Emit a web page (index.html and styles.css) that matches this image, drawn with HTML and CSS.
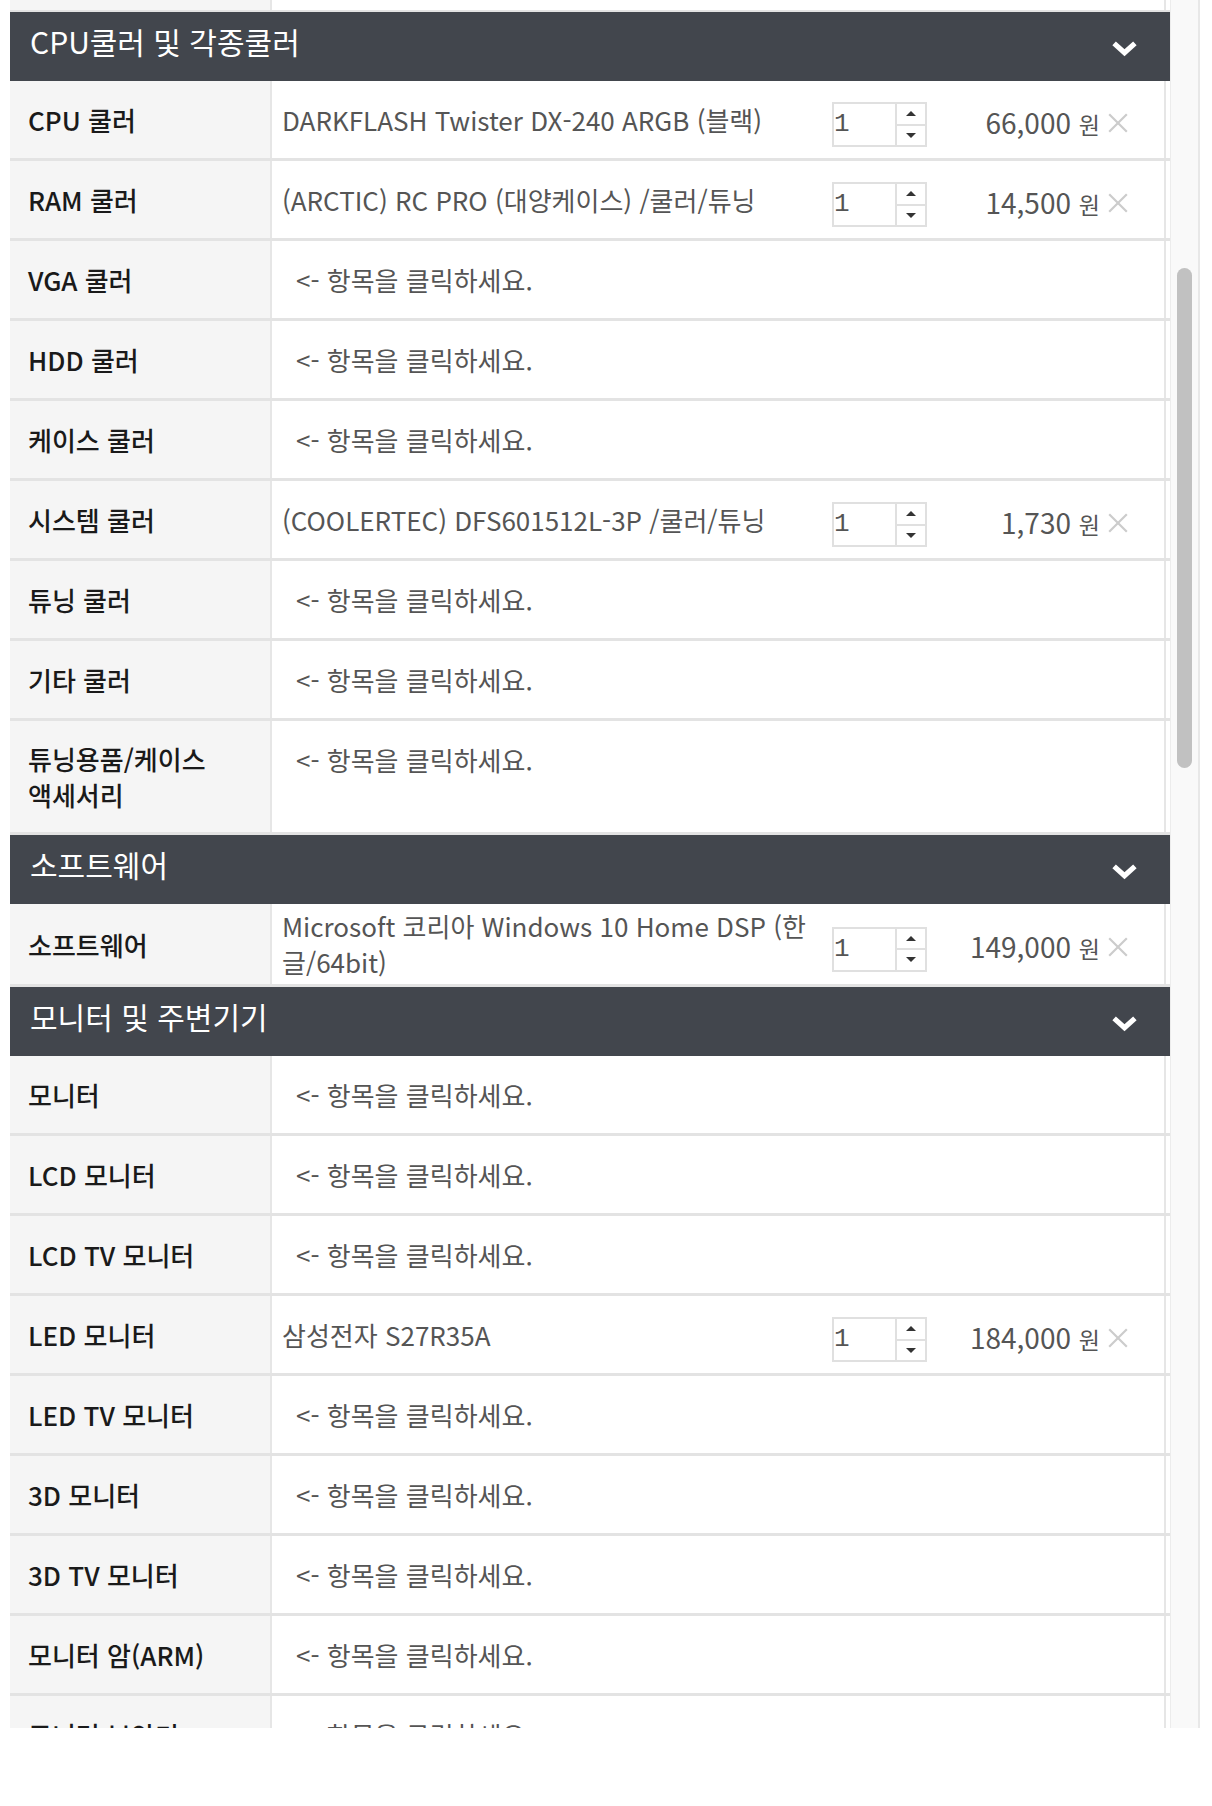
FILE: index.html
```html
<!DOCTYPE html>
<html lang="ko">
<head>
    <meta charset="UTF-8">
    <meta name="viewport" content="width=device-width, initial-scale=1.0">
    <title>견적 목록</title>
    <link rel="stylesheet" href="styles.css">
</head>
<body>
    <div class="panel">
        <div class="list">
            <div class="row row-cut">
                <div class="label"></div>
                <div class="item"></div>
            </div>

            <div class="group-head">
                <span>CPU쿨러 및 각종쿨러</span>
                <svg class="chev" viewBox="0 0 26 16"><path d="M3 3l10 9 10-9"/></svg>
            </div>
            <div class="row">
                <div class="label">CPU 쿨러</div>
                <div class="item">
                    <p class="name">DARKFLASH Twister DX-240 ARGB (블랙)</p>
                    <div class="qty"><span class="num">1</span><span class="spin"><i class="up"></i><i class="down"></i></span></div>
                    <div class="price">66,000 <small>원</small></div>
                    <svg class="del" viewBox="0 0 20 20"><path d="M2 2l16 16M18 2L2 18"/></svg>
                </div>
            </div>
            <div class="row">
                <div class="label">RAM 쿨러</div>
                <div class="item">
                    <p class="name">(ARCTIC) RC PRO (대양케이스) /쿨러/튜닝</p>
                    <div class="qty"><span class="num">1</span><span class="spin"><i class="up"></i><i class="down"></i></span></div>
                    <div class="price">14,500 <small>원</small></div>
                    <svg class="del" viewBox="0 0 20 20"><path d="M2 2l16 16M18 2L2 18"/></svg>
                </div>
            </div>
            <div class="row">
                <div class="label">VGA 쿨러</div>
                <div class="item"><p class="empty">&lt;- 항목을 클릭하세요.</p></div>
            </div>
            <div class="row">
                <div class="label">HDD 쿨러</div>
                <div class="item"><p class="empty">&lt;- 항목을 클릭하세요.</p></div>
            </div>
            <div class="row">
                <div class="label">케이스 쿨러</div>
                <div class="item"><p class="empty">&lt;- 항목을 클릭하세요.</p></div>
            </div>
            <div class="row">
                <div class="label">시스템 쿨러</div>
                <div class="item">
                    <p class="name">(COOLERTEC) DFS601512L-3P /쿨러/튜닝</p>
                    <div class="qty"><span class="num">1</span><span class="spin"><i class="up"></i><i class="down"></i></span></div>
                    <div class="price">1,730 <small>원</small></div>
                    <svg class="del" viewBox="0 0 20 20"><path d="M2 2l16 16M18 2L2 18"/></svg>
                </div>
            </div>
            <div class="row">
                <div class="label">튜닝 쿨러</div>
                <div class="item"><p class="empty">&lt;- 항목을 클릭하세요.</p></div>
            </div>
            <div class="row">
                <div class="label">기타 쿨러</div>
                <div class="item"><p class="empty">&lt;- 항목을 클릭하세요.</p></div>
            </div>
            <div class="row">
                <div class="label">튜닝용품/케이스 액세서리</div>
                <div class="item"><p class="empty">&lt;- 항목을 클릭하세요.</p></div>
            </div>

            <div class="group-head">
                <span>소프트웨어</span>
                <svg class="chev" viewBox="0 0 26 16"><path d="M3 3l10 9 10-9"/></svg>
            </div>
            <div class="row">
                <div class="label">소프트웨어</div>
                <div class="item">
                    <p class="name">Microsoft 코리아 Windows 10 Home DSP (한글/64bit)</p>
                    <div class="qty"><span class="num">1</span><span class="spin"><i class="up"></i><i class="down"></i></span></div>
                    <div class="price">149,000 <small>원</small></div>
                    <svg class="del" viewBox="0 0 20 20"><path d="M2 2l16 16M18 2L2 18"/></svg>
                </div>
            </div>

            <div class="group-head">
                <span>모니터 및 주변기기</span>
                <svg class="chev" viewBox="0 0 26 16"><path d="M3 3l10 9 10-9"/></svg>
            </div>
            <div class="row">
                <div class="label">모니터</div>
                <div class="item"><p class="empty">&lt;- 항목을 클릭하세요.</p></div>
            </div>
            <div class="row">
                <div class="label">LCD 모니터</div>
                <div class="item"><p class="empty">&lt;- 항목을 클릭하세요.</p></div>
            </div>
            <div class="row">
                <div class="label">LCD TV 모니터</div>
                <div class="item"><p class="empty">&lt;- 항목을 클릭하세요.</p></div>
            </div>
            <div class="row">
                <div class="label">LED 모니터</div>
                <div class="item">
                    <p class="name">삼성전자 S27R35A</p>
                    <div class="qty"><span class="num">1</span><span class="spin"><i class="up"></i><i class="down"></i></span></div>
                    <div class="price">184,000 <small>원</small></div>
                    <svg class="del" viewBox="0 0 20 20"><path d="M2 2l16 16M18 2L2 18"/></svg>
                </div>
            </div>
            <div class="row">
                <div class="label">LED TV 모니터</div>
                <div class="item"><p class="empty">&lt;- 항목을 클릭하세요.</p></div>
            </div>
            <div class="row">
                <div class="label">3D 모니터</div>
                <div class="item"><p class="empty">&lt;- 항목을 클릭하세요.</p></div>
            </div>
            <div class="row">
                <div class="label">3D TV 모니터</div>
                <div class="item"><p class="empty">&lt;- 항목을 클릭하세요.</p></div>
            </div>
            <div class="row">
                <div class="label">모니터 암(ARM)</div>
                <div class="item"><p class="empty">&lt;- 항목을 클릭하세요.</p></div>
            </div>
            <div class="row">
                <div class="label">모니터 보안기</div>
                <div class="item"><p class="empty">&lt;- 항목을 클릭하세요.</p></div>
            </div>
        </div>
        <div class="bar"><div class="thumb"></div></div>
    </div>
</body>
</html>
```

FILE: styles.css
```css
*{
    margin: 0;
    padding: 0;
    box-sizing: border-box;
}
body{
    background-color: #fff;
    font-family: "Noto Sans CJK KR", "Noto Sans", sans-serif;
    color: #555;
}
.panel{
    display: flex;
    width: 1190px;
    height: 1728px;
    margin-left: 10px;
    overflow: hidden;
}
.list{
    flex: 1;
    overflow: hidden;
}
.group-head{
    display: flex;
    align-items: center;
    justify-content: space-between;
    height: 69px;
    padding: 0 32px 11px 20px;
    background-color: #42464d;
    color: #fff;
    font-size: 30px;
}
.chev{
    width: 27px;
    height: 17px;
    margin-top: 14px;
    fill: none;
    stroke: #fff;
    stroke-width: 5;
}
.row{
    display: flex;
    min-height: 80px;
    border-bottom: 3px solid #e3e3e3;
}
.row-cut{
    min-height: 0;
    height: 12px;
    border-bottom-width: 2px;
}
.row-cut .item{
    min-height: 0;
}
.label{
    display: flex;
    align-items: center;
    width: 262px;
    flex-shrink: 0;
    padding: 20px 30px 19px 18px;
    background-color: #f5f5f5;
    border-right: 2px solid #e6e6e6;
    color: #1a1a1a;
    font-size: 26px;
    font-weight: 500;
    line-height: 36px;
    word-break: keep-all;
}
.row-cut .label{
    padding: 0;
}
.item{
    flex: 1;
    display: flex;
    align-items: center;
    min-height: 77px;
    margin-right: 4px;
    padding-left: 10px;
    border-right: 2px solid #e6e6e6;
    font-size: 26px;
    line-height: 36px;
}
.name{
    flex: 1;
    padding: 4px 8px 4px 0;
}
.empty{
    align-self: flex-start;
    margin-top: 21px;
    padding-left: 14px;
}
.qty{
    display: flex;
    width: 95px;
    height: 45px;
    margin-top: 10px;
    border: 2px solid #e0e0e0;
}
.qty .num{
    flex: 1;
    font-family: "Liberation Mono", monospace;
    font-size: 26px;
    line-height: 41px;
    color: #555;
}
.spin{
    display: flex;
    flex-direction: column;
    width: 30px;
    border-left: 2px solid #e0e0e0;
}
.spin i{
    flex: 1;
    display: flex;
    align-items: center;
    justify-content: center;
}
.spin .up{
    border-bottom: 2px solid #e0e0e0;
}
.spin .up::after,
.spin .down::after{
    content: "";
    border-left: 5px solid transparent;
    border-right: 5px solid transparent;
}
.spin .up::after{
    border-bottom: 5px solid #333;
}
.spin .down::after{
    border-top: 5px solid #333;
}
.price{
    width: 173px;
    padding-top: 6px;
    text-align: right;
    font-size: 28px;
    color: #555;
    white-space: nowrap;
}
.price small{
    font-size: 23px;
}
.del{
    width: 22px;
    height: 22px;
    margin: 6px 35px 0 7px;
    fill: none;
    stroke: #ccc;
    stroke-width: 2;
}
.bar{
    width: 30px;
    background-color: #f9f9f9;
    border-left: 1px solid #ececec;
    border-right: 2px solid #e8e8e8;
}
.thumb{
    width: 15px;
    height: 500px;
    margin: 268px auto 0;
    border-radius: 8px;
    background-color: #c1c1c1;
}
```
